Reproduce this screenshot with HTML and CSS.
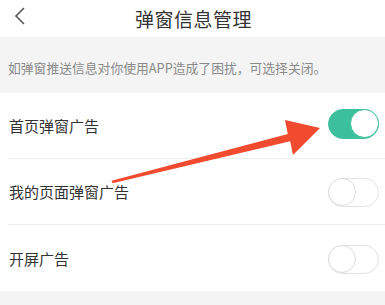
FILE: index.html
```html
<!DOCTYPE html>
<html lang="zh">
<head>
<meta charset="utf-8">
<link rel="stylesheet" href="styles.css">
</head>
<body>
<div class="page">
  <header class="topbar">
    <svg class="back" width="12" height="18" viewBox="0 0 12 18"><path d="M10 1 L2 9 L10 17" fill="none" stroke="#555" stroke-width="1.6"/></svg>
    <div class="title">弹窗信息管理</div>
  </header>
  <div class="notice">如弹窗推送信息对你使用APP造成了困扰，可选择关闭。</div>
  <div class="list">
    <div class="row"><span class="label">首页弹窗广告</span><span class="switch on"><span class="knob"></span></span></div>
    <div class="row"><span class="label">我的页面弹窗广告</span><span class="switch"><span class="knob"></span></span></div>
    <div class="row"><span class="label">开屏广告</span><span class="switch"><span class="knob"></span></span></div>
  </div>
  <div class="footer"></div>
  <svg class="arrow" width="385" height="305" viewBox="0 0 385 305"><polygon points="111.5,180.8 287.8,134 285,120 320,128 293,155 290.2,141.2 112.5,183.2" fill="#f04b2f"/></svg>
</div>
</body>
</html>
```
FILE: styles.css
```css
html, body { margin: 0; padding: 0; }
body {
  font-family: "Noto Sans CJK SC", "Noto Sans", sans-serif;
  background: #fff;
  width: 385px;
  height: 305px;
  overflow: hidden;
}
.page { position: relative; width: 385px; height: 305px; }
.topbar {
  position: relative;
  height: 37px;
  display: flex;
  align-items: center;
  justify-content: center;
}
.back { position: absolute; left: 14px; top: 7px; }
.title { font-size: 19px; color: #333; letter-spacing: 0.5px; margin-left: 2px; }
.notice {
  height: 56px;
  box-sizing: border-box;
  background: #f4f4f4;
  padding: 21px 0 0 8px;
  font-size: 12.8px;
  line-height: 20px;
  color: #8a8a8a;
}
.row {
  height: 66px;
  box-sizing: border-box;
  margin-left: 8px;
  padding-right: 6px;
  padding-left: 1px;
  display: flex;
  align-items: center;
  justify-content: space-between;
  border-bottom: 1px solid #eeeeee;
}
.row:last-child { border-bottom: none; }
.label { font-size: 15px; color: #333; }
.switch {
  position: relative;
  width: 51px;
  height: 29px;
  box-sizing: border-box;
  border-radius: 15px;
  border: 1.5px solid #e2e2e2;
  background: #fff;
  margin-top: 2px;
}
.switch .knob {
  position: absolute;
  left: -1px;
  top: -1px;
  width: 26px;
  height: 26px;
  border-radius: 50%;
  border: 1.5px solid #dcdcdc;
  background: #fff;
}
.switch.on { background: #3cbf9c; border-color: #3cbf9c; margin-top: -4px; height: 30px; }
.switch.on .knob { left: auto; right: -1px; top: -1px; width: 27px; height: 27px; border-color: #3cbf9c; }
.footer { height: 14px; background: #f4f4f4; }
.arrow { position: absolute; left: 0; top: 0; }
```
